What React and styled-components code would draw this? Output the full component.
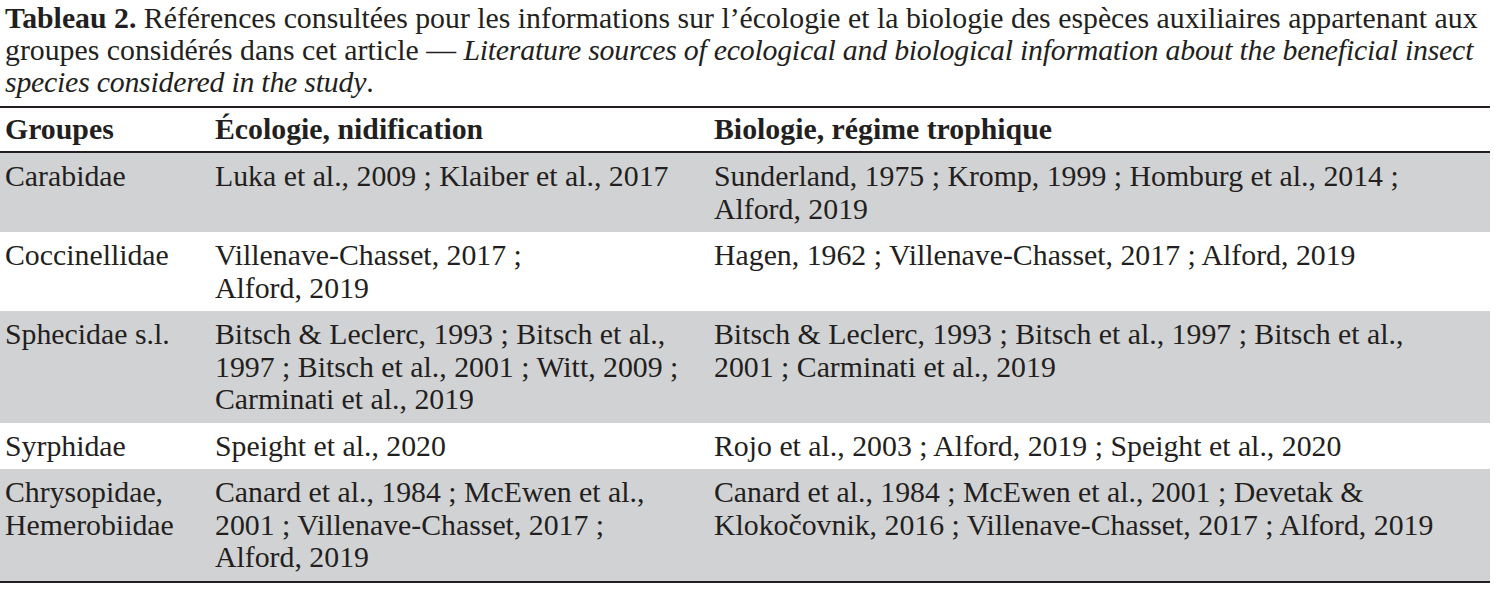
import React from "react";
import styled, { createGlobalStyle } from "styled-components";

const Global = createGlobalStyle`
  html, body { margin: 0; padding: 0; background: #ffffff; }
  body { font-family: "Liberation Serif", "Times New Roman", serif; color: #231f20; }
`;

const Page = styled.div`
  width: 1490px;
`;

const Caption = styled.div`
  font-size: 29.8px;
  line-height: 32px;
  padding: 2px 0 8px 5px;
`;

const CapLine = styled.div`
  white-space: nowrap;
`;

const Bold = styled.b`
  font-weight: 700;
`;

const Em = styled.i`
  font-style: italic;
  letter-spacing: -0.22px;
`;

const Table = styled.div`
  display: grid;
  grid-template-columns: 210px 499px 1fr;
  border-top: 2px solid #231f20;
  border-bottom: 2px solid #231f20;
`;

const HeadCell = styled.div`
  font-weight: 700;
  font-size: 29.8px;
  line-height: 32px;
  padding: 5px 5px 6px 5px;
  border-bottom: 2px solid #231f20;
  white-space: nowrap;
`;

const Cell = styled.div`
  font-size: 29.8px;
  line-height: 32.5px;
  padding: 7px 5px 7px 5px;
  background: ${(p) => (p.$shade ? "#d1d2d4" : "#ffffff")};
`;

const Line = styled.div`
  white-space: nowrap;
`;

const rows = [
  {
    g: ["Carabidae"],
    e: ["Luka et al., 2009 ; Klaiber et al., 2017"],
    b: ["Sunderland, 1975 ; Kromp, 1999 ; Homburg et al., 2014 ;", "Alford, 2019"],
  },
  {
    g: ["Coccinellidae"],
    e: ["Villenave-Chasset, 2017 ;", "Alford, 2019"],
    b: ["Hagen, 1962 ; Villenave-Chasset, 2017 ; Alford, 2019"],
  },
  {
    g: ["Sphecidae s.l."],
    e: ["Bitsch & Leclerc, 1993 ; Bitsch et al.,", "1997 ; Bitsch et al., 2001 ; Witt, 2009 ;", "Carminati et al., 2019"],
    b: ["Bitsch & Leclerc, 1993 ; Bitsch et al., 1997 ; Bitsch et al.,", "2001 ; Carminati et al., 2019"],
  },
  {
    g: ["Syrphidae"],
    e: ["Speight et al., 2020"],
    b: ["Rojo et al., 2003 ; Alford, 2019 ; Speight et al., 2020"],
  },
  {
    g: ["Chrysopidae,", "Hemerobiidae"],
    e: ["Canard et al., 1984 ; McEwen et al.,", "2001 ; Villenave-Chasset, 2017 ;", "Alford, 2019"],
    b: ["Canard et al., 1984 ; McEwen et al., 2001 ; Devetak &", "Klokočovnik, 2016 ; Villenave-Chasset, 2017 ; Alford, 2019"],
  },
];

function Lines({ items }) {
  return items.map((t, i) => <Line key={i}>{t}</Line>);
}

export default function App() {
  return (
    <Page>
      <Global />
      <Caption>
        <CapLine>
          <Bold>Tableau 2.</Bold> Références consultées pour les informations sur l’écologie et la biologie des espèces auxiliaires appartenant aux
        </CapLine>
        <CapLine>
          groupes considérés dans cet article — <Em>Literature sources of ecological and biological information about the beneficial insect</Em>
        </CapLine>
        <CapLine>
          <Em>species considered in the study</Em>.
        </CapLine>
      </Caption>
      <Table>
        <HeadCell>Groupes</HeadCell>
        <HeadCell>Écologie, nidification</HeadCell>
        <HeadCell>Biologie, régime trophique</HeadCell>
        {rows.map((r, i) => {
          const shade = i % 2 === 0;
          return (
            <React.Fragment key={i}>
              <Cell $shade={shade}><Lines items={r.g} /></Cell>
              <Cell $shade={shade}><Lines items={r.e} /></Cell>
              <Cell $shade={shade}><Lines items={r.b} /></Cell>
            </React.Fragment>
          );
        })}
      </Table>
    </Page>
  );
}
